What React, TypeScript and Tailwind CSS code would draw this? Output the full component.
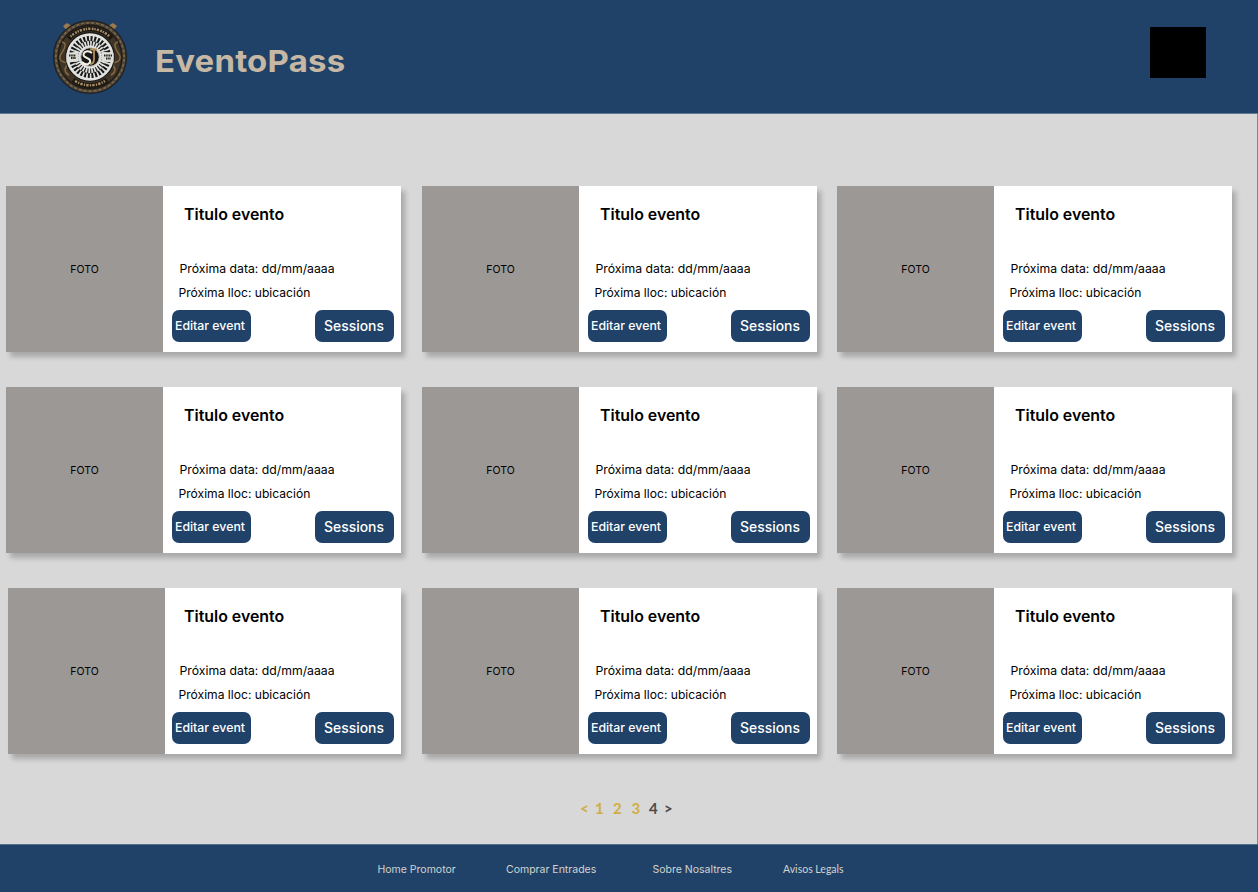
import React from "react";

function Logo() {
  return (
    <svg className="h-[78px] w-[78px] shrink-0" viewBox="-39 -39 78 78" fill="none" aria-hidden="true">
      <path d="M-27-31l4-3 5 3-4 6zM27-31l-4-3-5 3 4 6z" fill="#9a7b4d" />
      <circle r="36.5" fill="#3c3429" stroke="#1e2125" strokeWidth="1.2" />
      <circle r="34.2" stroke="#75634a" strokeWidth="2" />
      <circle r="34.2" stroke="#4a4032" strokeWidth="2" strokeDasharray="2 3" />
      <circle r="31.8" stroke="#211c16" strokeWidth="1.4" />
      <circle r="27.5" stroke="#3f3426" strokeWidth="6" />
      <path d="M-21.5-18.5A28.5 28.5 0 0 1 21.5-18.5" stroke="#1b1814" strokeWidth="5" />
      <path d="M-17 23A28.5 28.5 0 0 0 17 23" stroke="#1b1814" strokeWidth="5" />
      <path d="M-19.5-20.5A28.5 28.5 0 0 1 19.5-20.5" stroke="#a98e68" strokeWidth="2.5" strokeDasharray="1.4 1 2.2 1.4 1.8 .8" />
      <path d="M-15 24A28.5 28.5 0 0 0 15 24" stroke="#a98e68" strokeWidth="2.5" strokeDasharray="2.4 1.2 1.3 1.1" />
      <path d="M-28-15q5 1 2 7l-4 7q-1 5 4 6t1 7q0 4 4 6M28-15q-5 1-2 7l4 7q1 5-4 6t-1 7q0 4-4 6" stroke="#866a43" strokeWidth="1.5" />
      <circle r="24.3" fill="#e1e2df" stroke="#181713" strokeWidth="1.2" />
      <circle r="14" stroke="#242424" strokeWidth="5" strokeDasharray="1.2 1.732" />
      <circle r="18.5" stroke="#181818" strokeWidth="5" strokeDasharray="2 1.632" />
      <path d="M-23.5-4l12-1.5v10l-12 1zM23.5-4l-12-1.5v10l12 1z" fill="#deded9" />
      <path d="M-21-1.5h7M-19 1h5M14-1.5h8M16 1.5h5" stroke="#22221f" strokeWidth="1.8" strokeDasharray="1.5 .7" />
      <circle r="9.3" fill="#171614" stroke="#c9c8c2" strokeWidth="1" />
      <path d="M4-7v9q0 5-4 5M0-7.5h7" stroke="#b29057" strokeWidth="1.8" />
      <path d="M2-4Q-1.5-7-5-5q-3 3 0 5l4 2q3 3-1 5-3 1-6-2" stroke="#f3f1e8" strokeWidth="2" />
    </svg>
  );
}

function EventCard({ shifted = false }: { shifted?: boolean }) {
  return (
    <article className={`flex h-[166px] bg-white text-black shadow-[4px_5px_5px_rgba(0,0,0,0.22)] ${shifted ? "ml-[1.5px] w-[393.5px]" : "w-[395px]"}`}>
      <div className={`flex w-[157px] shrink-0 items-center justify-center bg-[#9c9896] pt-[2px] text-[10.5px] leading-4 ${shifted ? "pr-[3px]" : ""}`}>
        FOTO
      </div>
      <div className={`flex min-w-0 flex-1 flex-col pr-[7px] pt-[17px] whitespace-nowrap ${shifted ? "pl-[7.5px]" : "pl-[9px]"}`}>
        <h2 className="ml-3 text-[15.9px] leading-6 font-semibold">Titulo evento</h2>
        <p className="mt-8 ml-[7.5px] text-[12.25px] leading-5">Próxima data: dd/mm/aaaa</p>
        <p className="mt-1 ml-[6.5px] text-[12.1px] leading-5">Próxima lloc: ubicación</p>
        <div className="mt-[7.25px] -ml-[0.5px] flex justify-between">
          <button className="h-[31.5px] w-[79px] rounded-[7px] bg-[#204268] pt-px pr-[2px] text-[12.3px] font-medium text-white">Editar event</button>
          <button className="h-[31.5px] w-[79px] rounded-[7px] bg-[#204268] pr-px text-[13.9px] font-medium text-white">Sessions</button>
        </div>
      </div>
    </article>
  );
}

export default function App() {
  return (
    <div className="flex h-[892px] w-[1258px] flex-col overflow-hidden bg-[#d8d8d8] font-['Inter',sans-serif]">
      <header className="flex h-[113.5px] shrink-0 items-start justify-between border-b border-[#5d7794] bg-[#204268] pr-[52px] pl-[51px]">
        <div className="flex pt-[18px]">
          <Logo />
          <h1 className="mt-[23px] ml-[26px] origin-left scale-x-108 text-[30.5px] leading-10 font-bold tracking-[0.2px] text-[#c6b8a4]">EventoPass</h1>
        </div>
        <div className="mt-[27px] h-[51px] w-[56px] bg-black" />
      </header>
      <main className="flex flex-1 flex-col items-center border-r border-[#858585]">
        <div className="mt-[72.5px] grid w-full grid-cols-[416px_415px_395px] gap-y-[35px] pl-[6px]">
          {Array.from({ length: 9 }, (_, i) => <EventCard key={i} shifted={i === 6} />)}
        </div>
        <nav className="mt-[44px] flex w-full pl-[580px] font-['Lato',sans-serif] text-[15px] leading-5 font-bold text-[#cfae45]">
          <span className="w-[15px]">&lt;</span>
          <span className="w-[18px]">1</span>
          <span className="w-[18.5px]">2</span>
          <span className="w-[17.5px]">3</span>
          <span className="w-[15px] text-[#4b4b4b]">4</span>
          <span className="text-[#4b4b4b]">&gt;</span>
        </nav>
      </main>
      <footer className="flex h-[48px] shrink-0 border-t border-[#526e8d] bg-[#204268] pt-[17px] pl-[377.5px] text-[10.5px] leading-4 whitespace-nowrap text-[#d2d3cf]">
        <a className="w-[128.5px]">Home Promotor</a>
        <a className="w-[146.5px]">Comprar Entrades</a>
        <a className="w-[130.5px]">Sobre Nosaltres</a>
        <a className="-mt-px font-['Lato',sans-serif]">Avisos Legals</a>
      </footer>
    </div>
  );
}
